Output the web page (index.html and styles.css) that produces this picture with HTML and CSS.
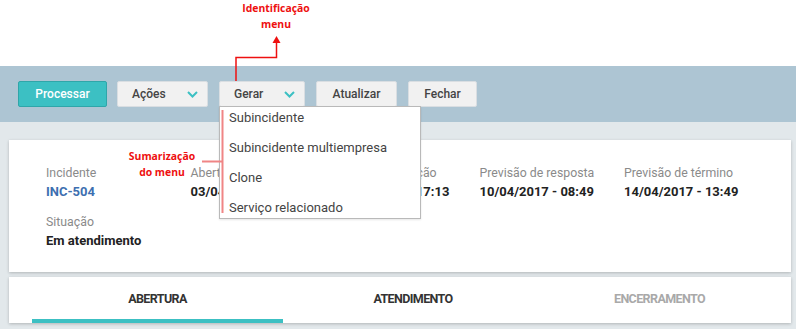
FILE: index.html
```html
<!DOCTYPE html>
<html lang="pt-BR">
<head>
    <meta charset="UTF-8">
    <title>Incidente INC-504</title>
    <link rel="stylesheet" href="styles.css">
</head>
<body>
<div class="pagina">
    <div class="topo"></div>

    <!-- Barra de ações -->
    <div class="toolbar">
        <button class="btn btn-primario">Processar</button>
        <button class="btn btn-menu btn-acoes">Ações
            <svg class="chevron" width="11" height="7" viewBox="0 0 11 7"><path d="M1 1l4.5 4.5L10 1"/></svg>
        </button>
        <div class="menu-wrap">
            <button class="btn btn-menu btn-gerar">Gerar
                <svg class="chevron" width="11" height="7" viewBox="0 0 11 7"><path d="M1 1l4.5 4.5L10 1"/></svg>
            </button>
            <ul class="dropdown">
                <li>Subincidente</li>
                <li>Subincidente multiempresa</li>
                <li>Clone</li>
                <li>Serviço relacionado</li>
            </ul>
        </div>
        <button class="btn btn-atualizar">Atualizar</button>
        <button class="btn btn-fechar">Fechar</button>
    </div>

    <main class="conteudo">
        <section class="card resumo">
            <div class="campo">
                <span class="rotulo">Incidente</span>
                <span class="valor link">INC-504</span>
            </div>
            <div class="campo">
                <span class="rotulo">Abertura</span>
                <span class="valor">03/04/2017 - 08:49</span>
            </div>
            <div class="campo">
                <span class="rotulo">Última atualização</span>
                <span class="valor">03/04/2017 - 17:13</span>
            </div>
            <div class="campo">
                <span class="rotulo">Previsão de resposta</span>
                <span class="valor">10/04/2017 - 08:49</span>
            </div>
            <div class="campo">
                <span class="rotulo">Previsão de término</span>
                <span class="valor">14/04/2017 - 13:49</span>
            </div>
            <div class="campo">
                <span class="rotulo">Situação</span>
                <span class="valor">Em atendimento</span>
            </div>
        </section>

        <nav class="card abas">
            <div class="aba ativa">ABERTURA</div>
            <div class="aba meio">ATENDIMENTO</div>
            <div class="aba desativada">ENCERRAMENTO</div>
        </nav>
    </main>

    <!-- Anotações -->
    <div class="nota nota-menu">Identificação<br>menu</div>
    <div class="nota nota-sumario">Sumarização<br>do menu</div>
    <svg class="marcas" width="796" height="329" viewBox="0 0 796 329">
        <path class="seta" d="M236 81V57.5H276.5V42"/>
        <polygon class="ponta" points="272.5,43 280.5,43 276.5,36"/>
        <path class="chave" d="M202 161.5H222.5M222.5 110V213"/>
    </svg>
</div>
</body>
</html>
```

FILE: styles.css
```css
body {
    margin: 0;
    font-family: Roboto, 'Liberation Sans', sans-serif;
    background-color: #e2e8eb;
    color: #333;
}

.pagina {
    position: relative;
    width: 796px;
    height: 329px;
    overflow: hidden;
}

.topo {
    height: 66px;
    background-color: #fff;
}

.toolbar {
    display: flex;
    align-items: flex-start;
    gap: 11px;
    height: 56px;
    padding: 15px 0 0 18px;
    box-sizing: border-box;
    background-color: #adc5d3;
}

.btn {
    display: flex;
    align-items: center;
    justify-content: center;
    height: 26px;
    padding: 0;
    margin: 0;
    font-family: inherit;
    font-size: 12px;
    font-weight: 500;
    color: #444;
    background-color: #f1f1f1;
    border: 1px solid #d9dee2;
    border-radius: 2px;
    cursor: pointer;
}

.btn-primario {
    width: 89px;
    margin-right: -1px;
    color: #fff;
    background-color: #3cc0c3;
    border-color: #2fa6a9;
}

.btn-menu {
    justify-content: space-between;
    padding: 0 9px 0 14px;
}

.btn-acoes { width: 91px; }
.btn-gerar { width: 86px; }
.btn-atualizar { width: 81px; }
.btn-fechar { width: 69px; }

.chevron {
    fill: none;
    stroke: #3cc0c3;
    stroke-width: 2;
}

.menu-wrap {
    position: relative;
}

.dropdown {
    position: absolute;
    top: 25px;
    left: 0;
    z-index: 5;
    width: 200px;
    margin: 0;
    padding: 0;
    list-style: none;
    background-color: #fff;
    border: 1px solid #b9b9b9;
    box-shadow: 0 1px 2px rgba(0, 0, 0, 0.1);
}

.dropdown li {
    height: 30px;
    line-height: 20px;
    padding: 1px 9px 0;
    box-sizing: border-box;
    font-size: 13px;
    color: #444;
    white-space: nowrap;
}

.dropdown li:last-child {
    height: 21px;
}

.conteudo {
    padding: 18px 5px 0 9px;
}

.card {
    background-color: #fff;
    box-shadow: 0 1px 3px rgba(0, 0, 0, 0.22);
}

.resumo {
    display: grid;
    grid-template-columns: repeat(5, 144.5px);
    align-content: start;
    row-gap: 14px;
    height: 132px;
    padding: 25px 37px 0;
    box-sizing: border-box;
}

.campo {
    display: flex;
    flex-direction: column;
    gap: 3px;
}

.rotulo {
    font-size: 12.3px;
    line-height: 16px;
    color: #8a8a8a;
    white-space: nowrap;
}

.valor {
    font-size: 13px;
    font-weight: 700;
    line-height: 16px;
    color: #222;
    white-space: nowrap;
}

.valor.link {
    color: #3d6fb0;
}

.abas {
    display: flex;
    height: 46px;
    margin-top: 5px;
    padding-left: 23px;
}

.aba {
    width: 251px;
    display: flex;
    align-items: center;
    justify-content: center;
    font-size: 12.5px;
    font-weight: 700;
    letter-spacing: -0.6px;
    color: #333;
    box-sizing: border-box;
    border-bottom: 4px solid transparent;
    padding-top: 1px;
}

.aba.meio {
    padding-left: 9px;
}

.aba.ativa {
    border-bottom-color: #3cc0c3;
}

.aba.desativada {
    color: #a9a9a9;
}

.nota {
    position: absolute;
    width: 80px;
    font-family: 'Open Sans', sans-serif;
    font-size: 10.4px;
    font-weight: 700;
    line-height: 16px;
    text-align: center;
    color: #ee1010;
    z-index: 6;
}

.nota-menu {
    left: 236px;
    top: 0;
}

.nota-sumario {
    left: 122px;
    top: 148px;
}

.marcas {
    position: absolute;
    left: 0;
    top: 0;
    z-index: 7;
    pointer-events: none;
}

.seta {
    fill: none;
    stroke: #ee1010;
    stroke-width: 1.5;
}

.ponta {
    fill: #ee1010;
}

.chave {
    fill: none;
    stroke: #f08585;
    stroke-width: 2;
}
```
